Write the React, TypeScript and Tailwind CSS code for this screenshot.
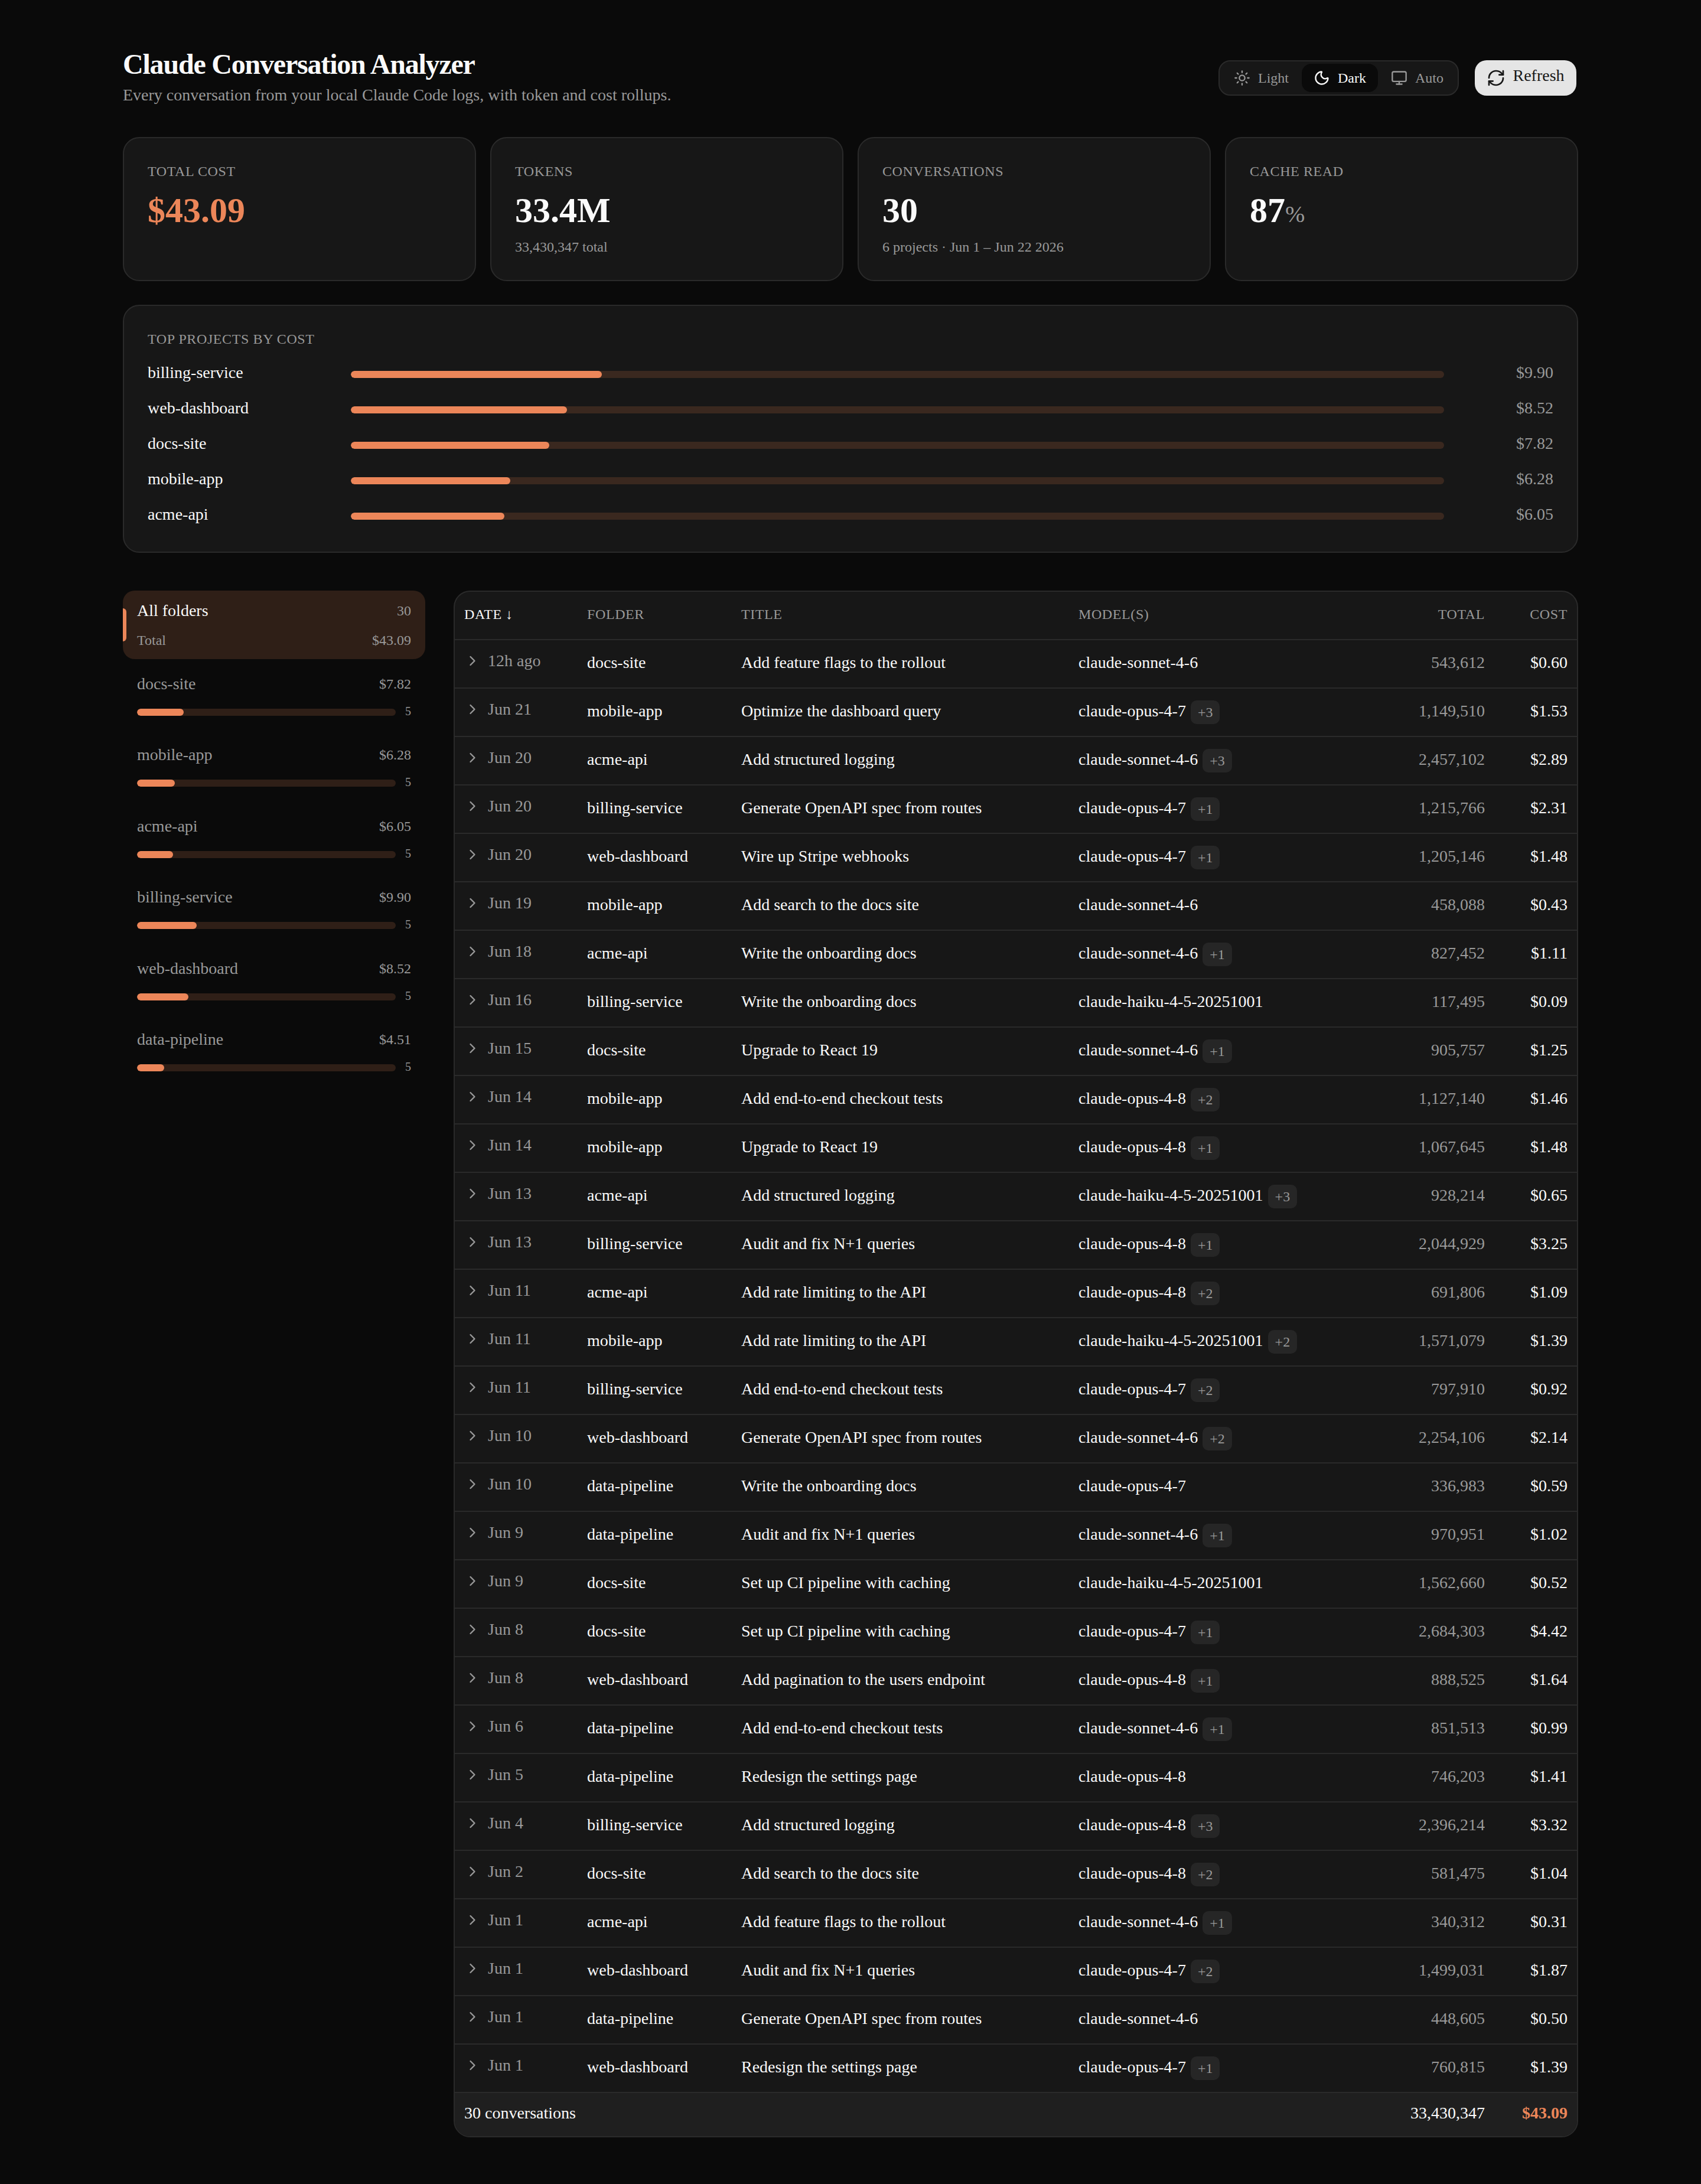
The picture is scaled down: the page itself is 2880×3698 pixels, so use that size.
import { ChevronRight, Monitor, Moon, RefreshCw, Sun } from 'lucide-react';

const TOTAL_COST = 43.09;

const topProjects = [
  { name: 'billing-service', cost: 9.9 },
  { name: 'web-dashboard', cost: 8.52 },
  { name: 'docs-site', cost: 7.82 },
  { name: 'mobile-app', cost: 6.28 },
  { name: 'acme-api', cost: 6.05 },
];

const folders = [
  { name: 'docs-site', cost: 7.82 },
  { name: 'mobile-app', cost: 6.28 },
  { name: 'acme-api', cost: 6.05 },
  { name: 'billing-service', cost: 9.9 },
  { name: 'web-dashboard', cost: 8.52 },
  { name: 'data-pipeline', cost: 4.51 },
];

type Row = [string, string, string, string, number, string, string];

const rows: Row[] = [
  ['12h ago', 'docs-site', 'Add feature flags to the rollout', 'claude-sonnet-4-6', 0, '543,612', '$0.60'],
  ['Jun 21', 'mobile-app', 'Optimize the dashboard query', 'claude-opus-4-7', 3, '1,149,510', '$1.53'],
  ['Jun 20', 'acme-api', 'Add structured logging', 'claude-sonnet-4-6', 3, '2,457,102', '$2.89'],
  ['Jun 20', 'billing-service', 'Generate OpenAPI spec from routes', 'claude-opus-4-7', 1, '1,215,766', '$2.31'],
  ['Jun 20', 'web-dashboard', 'Wire up Stripe webhooks', 'claude-opus-4-7', 1, '1,205,146', '$1.48'],
  ['Jun 19', 'mobile-app', 'Add search to the docs site', 'claude-sonnet-4-6', 0, '458,088', '$0.43'],
  ['Jun 18', 'acme-api', 'Write the onboarding docs', 'claude-sonnet-4-6', 1, '827,452', '$1.11'],
  ['Jun 16', 'billing-service', 'Write the onboarding docs', 'claude-haiku-4-5-20251001', 0, '117,495', '$0.09'],
  ['Jun 15', 'docs-site', 'Upgrade to React 19', 'claude-sonnet-4-6', 1, '905,757', '$1.25'],
  ['Jun 14', 'mobile-app', 'Add end-to-end checkout tests', 'claude-opus-4-8', 2, '1,127,140', '$1.46'],
  ['Jun 14', 'mobile-app', 'Upgrade to React 19', 'claude-opus-4-8', 1, '1,067,645', '$1.48'],
  ['Jun 13', 'acme-api', 'Add structured logging', 'claude-haiku-4-5-20251001', 3, '928,214', '$0.65'],
  ['Jun 13', 'billing-service', 'Audit and fix N+1 queries', 'claude-opus-4-8', 1, '2,044,929', '$3.25'],
  ['Jun 11', 'acme-api', 'Add rate limiting to the API', 'claude-opus-4-8', 2, '691,806', '$1.09'],
  ['Jun 11', 'mobile-app', 'Add rate limiting to the API', 'claude-haiku-4-5-20251001', 2, '1,571,079', '$1.39'],
  ['Jun 11', 'billing-service', 'Add end-to-end checkout tests', 'claude-opus-4-7', 2, '797,910', '$0.92'],
  ['Jun 10', 'web-dashboard', 'Generate OpenAPI spec from routes', 'claude-sonnet-4-6', 2, '2,254,106', '$2.14'],
  ['Jun 10', 'data-pipeline', 'Write the onboarding docs', 'claude-opus-4-7', 0, '336,983', '$0.59'],
  ['Jun 9', 'data-pipeline', 'Audit and fix N+1 queries', 'claude-sonnet-4-6', 1, '970,951', '$1.02'],
  ['Jun 9', 'docs-site', 'Set up CI pipeline with caching', 'claude-haiku-4-5-20251001', 0, '1,562,660', '$0.52'],
  ['Jun 8', 'docs-site', 'Set up CI pipeline with caching', 'claude-opus-4-7', 1, '2,684,303', '$4.42'],
  ['Jun 8', 'web-dashboard', 'Add pagination to the users endpoint', 'claude-opus-4-8', 1, '888,525', '$1.64'],
  ['Jun 6', 'data-pipeline', 'Add end-to-end checkout tests', 'claude-sonnet-4-6', 1, '851,513', '$0.99'],
  ['Jun 5', 'data-pipeline', 'Redesign the settings page', 'claude-opus-4-8', 0, '746,203', '$1.41'],
  ['Jun 4', 'billing-service', 'Add structured logging', 'claude-opus-4-8', 3, '2,396,214', '$3.32'],
  ['Jun 2', 'docs-site', 'Add search to the docs site', 'claude-opus-4-8', 2, '581,475', '$1.04'],
  ['Jun 1', 'acme-api', 'Add feature flags to the rollout', 'claude-sonnet-4-6', 1, '340,312', '$0.31'],
  ['Jun 1', 'web-dashboard', 'Audit and fix N+1 queries', 'claude-opus-4-7', 2, '1,499,031', '$1.87'],
  ['Jun 1', 'data-pipeline', 'Generate OpenAPI spec from routes', 'claude-sonnet-4-6', 0, '448,605', '$0.50'],
  ['Jun 1', 'web-dashboard', 'Redesign the settings page', 'claude-opus-4-7', 1, '760,815', '$1.39'],
];

function percent(cost: number) {
  return `${(cost / TOTAL_COST) * 100}%`;
}

function StatCard({ label, children, sub }: { label: string; children: React.ReactNode; sub?: string }) {
  return (
    <div className="rounded-[28px] border-2 border-[#2a2a2a] bg-[#171717] p-10">
      <div className="text-[24px] leading-8 tracking-[0.6px] text-[#999]">{label}</div>
      <div className="mt-[14px] text-[60px] font-bold leading-[72px]">{children}</div>
      {sub && <div className="mt-2.5 text-[24px] leading-8 text-[#999]">{sub}</div>}
    </div>
  );
}

function Bar({ cost, className }: { cost: number; className: string }) {
  return (
    <div className={`h-3 overflow-hidden rounded-full ${className}`}>
      <div className="h-full rounded-full bg-[#ec8659]" style={{ width: percent(cost) }} />
    </div>
  );
}

export default function App() {
  return (
    <div className="min-h-[3698px] bg-[#0a0a0a] px-[208px] pt-20 pb-20 text-[#fafafa] [font-family:'Liberation_Serif',serif]">
      {/* Header */}
      <header className="mb-12 flex h-[104px] items-center justify-between">
        <div>
          <h1 className="text-[48px] font-bold leading-[58px] tracking-[-1.2px]">Claude Conversation Analyzer</h1>
          <p className="text-[28px] leading-[46px] text-[#999]">
            Every conversation from your local Claude Code logs, with token and cost rollups.
          </p>
        </div>
        <div className="mr-[3px] flex items-center gap-[27px]">
          <div className="flex h-[60px] items-center gap-0.5 rounded-[20px] border-2 border-[#2a2a2a] bg-[#171717] px-1 text-[24px] text-[#999]">
            <div className="flex h-12 items-center gap-[13px] rounded-[16px] px-5">
              <Sun size={28} strokeWidth={2} />
              Light
            </div>
            <div className="flex h-12 items-center gap-[13px] rounded-[16px] bg-[#0a0a0a] px-5 text-[#fafafa]">
              <Moon size={28} strokeWidth={2} />
              Dark
            </div>
            <div className="flex h-12 items-center gap-[13px] rounded-[16px] px-5">
              <Monitor size={28} strokeWidth={2} />
              Auto
            </div>
          </div>
          <button className="flex h-[60px] w-[172px] items-center justify-center gap-3 rounded-[20px] bg-[#e5e5e5] text-[28px] text-[#171717]">
            <RefreshCw size={32} strokeWidth={2} />
            <span className="pb-2">Refresh</span>
          </button>
        </div>
      </header>

      {/* Stats */}
      <section className="mb-10 grid grid-cols-4 gap-6">
        <StatCard label="TOTAL COST">
          <span className="text-[#ec8659]">$43.09</span>
        </StatCard>
        <StatCard label="TOKENS" sub="33,430,347 total">
          33.4M
        </StatCard>
        <StatCard label="CONVERSATIONS" sub="6 projects · Jun 1 – Jun 22 2026">
          30
        </StatCard>
        <StatCard label="CACHE READ">
          87<span className="text-[40px] font-normal text-[#999]">%</span>
        </StatCard>
      </section>

      {/* Top projects */}
      <section className="mb-[64px] rounded-[28px] border-2 border-[#2a2a2a] bg-[#171717] p-10">
        <div className="text-[24px] leading-8 tracking-[0.6px] text-[#999]">TOP PROJECTS BY COST</div>
        <div className="mt-6 flex flex-col gap-5">
          {topProjects.map((p) => (
            <div key={p.name} className="flex h-10 items-center">
              <div className="w-[344px] pb-1.5 text-[28px]">{p.name}</div>
              <Bar cost={p.cost} className="flex-1 bg-[#3a281f]" />
              <div className="w-[185px] pb-1.5 text-right text-[28px] text-[#999]">${p.cost.toFixed(2)}</div>
            </div>
          ))}
        </div>
      </section>

      <div className="flex items-start gap-12">
        {/* Folders */}
        <aside className="flex w-[512px] shrink-0 flex-col gap-1">
          <div className="relative rounded-[20px] bg-[#2f1f17] px-6 py-4">
            <div className="absolute left-0 top-[30px] h-14 w-1.5 rounded-r-full bg-[#ec8659]" />
            <div className="flex h-9 items-center justify-between text-[28px]">
              <span>All folders</span>
              <span className="text-[24px] text-[#999]">30</span>
            </div>
            <div className="mt-4 flex h-8 items-center justify-between text-[24px] text-[#999]">
              <span>Total</span>
              <span>$43.09</span>
            </div>
          </div>
          {folders.map((f) => (
            <div key={f.name} className="h-[116.4px] px-6 pt-5">
              <div className="flex h-9 items-center justify-between text-[#999]">
                <span className="text-[28px]">{f.name}</span>
                <span className="text-[24px]">${f.cost.toFixed(2)}</span>
              </div>
              <div className="mt-3.5 flex h-8 items-center gap-4">
                <Bar cost={f.cost} className="flex-1 bg-[#2f1f17]" />
                <span className="pb-1 text-[20px] text-[#999]">5</span>
              </div>
            </div>
          ))}
        </aside>

        {/* Conversations */}
        <div className="min-w-0 flex-1 overflow-hidden rounded-[28px] border-2 border-[#2a2a2a] bg-[#171717]">
          <table className="w-full table-fixed border-collapse text-left text-[28px]">
            <colgroup>
              <col className="w-[208px]" />
              <col className="w-[261px]" />
              <col className="w-[571px]" />
              <col />
              <col className="w-[200px]" />
              <col className="w-[140px]" />
            </colgroup>
            <thead>
              <tr className="h-[81px] text-[24px] tracking-[0.6px] text-[#999]">
                <th className="px-4 pb-1 font-normal text-[#fafafa]">DATE ↓</th>
                <th className="px-4 pb-1 font-normal">FOLDER</th>
                <th className="px-4 pb-1 font-normal">TITLE</th>
                <th className="px-4 pb-1 font-normal">MODEL(S)</th>
                <th className="px-4 pb-1 text-right font-normal">TOTAL</th>
                <th className="px-4 pb-1 text-right font-normal">COST</th>
              </tr>
            </thead>
            <tbody>
              {rows.map(([date, folder, title, model, extra, total, cost], i) => (
                <tr key={i} className="h-[82px] border-t-2 border-[#2a2a2a]">
                  <td className="px-4">
                    <div className="flex items-center pb-2.5 text-[#999]">
                      <ChevronRight size={28} strokeWidth={2} className="mr-3 shrink-0" />
                      {date}
                    </div>
                  </td>
                  <td className="px-4 pb-1">{folder}</td>
                  <td className="px-4 pb-1">{title}</td>
                  <td className="px-4">
                    <div className="flex items-center gap-2">
                      <span className="pb-1">{model}</span>
                      {extra > 0 && (
                        <span className="flex h-10 items-center rounded-[10px] bg-[#262626] px-3 text-[24px] text-[#999]">
                          +{extra}
                        </span>
                      )}
                    </div>
                  </td>
                  <td className="px-4 pb-1 text-right text-[#999]">{total}</td>
                  <td className="px-4 pb-1 text-right">{cost}</td>
                </tr>
              ))}
              <tr className="h-[74px] border-t-2 border-[#2a2a2a] bg-[#1f1f1f]">
                <td colSpan={4} className="px-4 pb-1.5">30 conversations</td>
                <td className="px-4 pb-1.5 text-right">33,430,347</td>
                <td className="px-4 pb-1.5 text-right font-bold text-[#ec8659]">$43.09</td>
              </tr>
            </tbody>
          </table>
        </div>
      </div>
    </div>
  );
}
